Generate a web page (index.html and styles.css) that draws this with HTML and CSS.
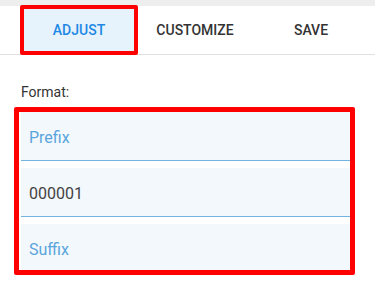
FILE: index.html
```html
<!DOCTYPE html>
<html lang="en">
<head>
    <meta charset="UTF-8">
    <meta name="viewport" content="width=device-width, initial-scale=1.0">
    <title>Format</title>
    <link rel="stylesheet" href="styles.css">
</head>
<body>
    <div class="top-strip"></div>

    <nav class="tab-bar">
        <div class="tab active">
            ADJUST
            <span class="highlight"></span>
        </div>
        <div class="tab">CUSTOMIZE</div>
        <div class="tab">SAVE</div>
    </nav>

    <div class="content">
        <div class="form-label">Format:</div>

        <div class="format-fields">
            <div class="field placeholder">Prefix</div>
            <div class="field">000001</div>
            <div class="field placeholder">Suffix</div>
            <span class="highlight"></span>
        </div>
    </div>
</body>
</html>
```

FILE: styles.css
```css
* {
    margin: 0;
    padding: 0;
    box-sizing: border-box;
}

body {
    font-family: Roboto, 'Liberation Sans', Arial, sans-serif;
    background: white;
    width: 375px;
    height: 282px;
    overflow: hidden;
}

.top-strip {
    height: 6px;
    background: #eeeeee;
}

.tab-bar {
    display: flex;
    height: 49px;
    padding-left: 21px;
    border-bottom: 1px solid #e0e0e0;
}

.tab {
    position: relative;
    width: 116px;
    height: 48px;
    display: flex;
    align-items: center;
    justify-content: center;
    font-size: 14px;
    font-weight: 500;
    color: #333333;
}

.tab.active {
    color: #1e88e5;
    background: #e6f2fc;
    border-bottom: 3px solid #1e88e5;
    padding-top: 3px;
}

.highlight {
    position: absolute;
    border: 4px solid #ff0000;
    border-radius: 2px;
    pointer-events: none;
}

.tab .highlight {
    left: -1px;
    right: -1px;
    top: -1px;
    bottom: -4px;
}

.content {
    padding: 27px 24px 0 21px;
}

.form-label {
    font-size: 14px;
    line-height: 20px;
    color: #333333;
    margin-bottom: 10px;
}

.format-fields {
    position: relative;
    display: flex;
    flex-direction: column;
    gap: 7px;
}

.field {
    height: 49px;
    display: flex;
    align-items: center;
    padding: 3px 8px 0;
    background: #f3f8fc;
    border-bottom: 1px solid #72b3e0;
    font-size: 16px;
    color: #424242;
}

.field.placeholder {
    color: #5aa5dc;
}

.format-fields .highlight {
    left: -7px;
    right: -4px;
    top: -5px;
    bottom: -2px;
    border-width: 5px;
}
```
